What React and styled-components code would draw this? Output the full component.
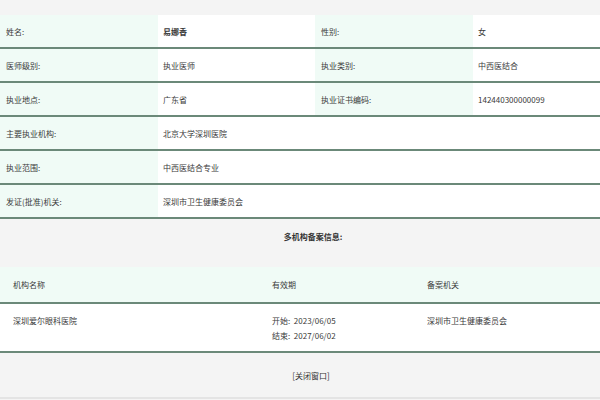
import React from 'react';
import styled, { createGlobalStyle } from 'styled-components';

const GlobalStyle = createGlobalStyle`
  body {
    margin: 0;
    background: #f4f4f4;
    font-family: "Noto Sans CJK SC", "Noto Sans", sans-serif;
    font-size: 8px;
    color: #333;
  }
`;

const Page = styled.div`
  width: 600px;
  padding-top: 15px;
`;

const InfoTable = styled.table`
  width: 600px;
  border-collapse: collapse;
  table-layout: fixed;
`;

const Row = styled.tr`
  border-bottom: 2px solid #6b8979;
`;

const Label = styled.td`
  height: 32px;
  padding: 0 0 0 6px;
  background: #f0fbf6;
  color: #3a3a3a;
  vertical-align: middle;
`;

const Value = styled.td`
  height: 32px;
  padding: 0 0 0 5px;
  background: #fff;
  color: #3a3a3a;
  font-weight: ${({ $bold }) => ($bold ? 700 : 400)};
  vertical-align: middle;
`;

const SectionTitle = styled.div`
  height: 35px;
  padding-left: 26px;
  display: flex;
  align-items: center;
  justify-content: center;
  font-weight: 700;
  color: #333;
`;

const ListTable = styled.table`
  width: 600px;
  margin-top: 13px;
  border-collapse: collapse;
  table-layout: fixed;
`;

const HeadRow = styled.tr`
  background: #f0fbf6;
  border-bottom: 2px solid #6b8979;
`;

const Th = styled.th`
  height: 35px;
  padding: 0 0 0 ${({ $pad }) => $pad || 0}px;
  text-align: left;
  font-weight: 400;
  color: #3a3a3a;
  vertical-align: middle;
`;

const BodyRow = styled.tr`
  background: #fff;
  border-bottom: 2px solid #6b8979;
`;

const Td = styled.td`
  height: 49px;
  padding: 9px 0 0 ${({ $pad }) => $pad || 0}px;
  vertical-align: top;
  line-height: 15px;
  color: #3a3a3a;
  box-sizing: border-box;
`;

const Footer = styled.div`
  height: 44px;
  padding-left: 22px;
  display: flex;
  align-items: center;
  justify-content: center;
  border-bottom: 2px solid #e4e4e4;
`;

const CloseLink = styled.a`
  color: #333;
  text-decoration: none;
  cursor: pointer;
`;

const rows = [
  [['姓名:', '易娜香', true], ['性别:', '女', false]],
  [['医师级别:', '执业医师', false], ['执业类别:', '中西医结合', false]],
  [['执业地点:', '广东省', false], ['执业证书编码:', '142440300000099', false]],
];

const wideRows = [
  ['主要执业机构:', '北京大学深圳医院'],
  ['执业范围:', '中西医结合专业'],
  ['发证(批准)机关:', '深圳市卫生健康委员会'],
];

export default function App() {
  return (
    <Page>
      <GlobalStyle />
      <InfoTable>
        <colgroup>
          <col style={{ width: 158 }} />
          <col style={{ width: 157 }} />
          <col style={{ width: 158 }} />
          <col />
        </colgroup>
        <tbody>
          {rows.map((pair, i) => (
            <Row key={i}>
              {pair.map(([label, value, bold]) => (
                <React.Fragment key={label}>
                  <Label>{label}</Label>
                  <Value $bold={bold}>{value}</Value>
                </React.Fragment>
              ))}
            </Row>
          ))}
          {wideRows.map(([label, value]) => (
            <Row key={label}>
              <Label>{label}</Label>
              <Value colSpan={3}>{value}</Value>
            </Row>
          ))}
        </tbody>
      </InfoTable>

      <SectionTitle>多机构备案信息:</SectionTitle>

      <ListTable>
        <colgroup>
          <col style={{ width: 272 }} />
          <col style={{ width: 155 }} />
          <col />
        </colgroup>
        <thead>
          <HeadRow>
            <Th $pad={13}>机构名称</Th>
            <Th>有效期</Th>
            <Th>备案机关</Th>
          </HeadRow>
        </thead>
        <tbody>
          <BodyRow>
            <Td $pad={13}>深圳爱尔眼科医院</Td>
            <Td>
              开始:&nbsp; 2023/06/05
              <br />
              结束:&nbsp; 2027/06/02
            </Td>
            <Td>深圳市卫生健康委员会</Td>
          </BodyRow>
        </tbody>
      </ListTable>

      <Footer>
        <CloseLink>[关闭窗口]</CloseLink>
      </Footer>
    </Page>
  );
}
